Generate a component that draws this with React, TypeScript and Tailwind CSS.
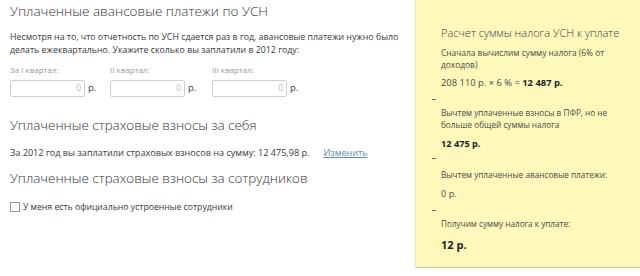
import React from "react";

const quarters = ["За I квартал:", "II квартал:", "III квартал:"];

const Dash = ({ mt }: { mt: string }) => <div className={`h-px w-[4px] bg-[#666] ml-[-9px] ${mt}`}></div>;

const App = () => {
  return (
    <div
      className="w-[640px] h-[276px] bg-white flex overflow-hidden text-[#3a3a3a]"
      style={{ fontFamily: '"Open Sans", "Noto Sans", sans-serif' }}
    >
      <div className="flex-1 pl-[10px] pt-[1px]">
        <h2 className="text-[13.5px] font-light leading-[20px] text-[#333]">Уплаченные авансовые платежи по УСН</h2>
        <p className="mt-[10px] text-[8.8px] leading-[13px] w-[395px]">
          Несмотря на то, что отчетность по УСН сдается раз в год, авансовые платежи нужно было делать ежеквартально. Укажите сколько вы заплатили в 2012 году:
        </p>
        <div className="flex mt-[7px]">
          {quarters.map((q, i) => (
            <div key={i} className={i === 0 ? "w-[100px]" : "w-[102px]"}>
              <div className="text-[8px] text-[#999] leading-[12px]">{q}</div>
              <div className="flex items-center mt-[4px]">
                <div className="w-[75px] h-[17px] border border-[#cfcfcf] rounded-[2px] flex items-center justify-end pr-[3px] text-[8.5px] text-[#bbb]">
                  0
                </div>
                <span className="ml-[3px] text-[9.5px]">р.</span>
              </div>
            </div>
          ))}
        </div>
        <h2 className="mt-[18px] text-[13.4px] font-light leading-[20px] text-[#333]">Уплаченные страховые взносы за себя</h2>
        <div className="mt-[11px] text-[9.1px] leading-[14px] flex">
          <span>За 2012 год вы заплатили страховых взносов на сумму: 12 475,98 р.</span>
          <span className="ml-[14px] text-[#5b8db5] underline">Изменить</span>
        </div>
        <h2 className="mt-[8px] text-[13.4px] font-light leading-[20px] text-[#333]">Уплаченные страховые взносы за сотрудников</h2>
        <label className="mt-[12px] flex items-center text-[8.7px] leading-[14px]">
          <span className="w-[10px] h-[10px] border border-[#999] bg-white mr-[3px]"></span>
          У меня есть официально устроенные сотрудники
        </label>
      </div>
      <div className="w-[225px] h-[268px] shrink-0 bg-[#fdf9ba] border-l border-[#efe9a8] border-b border-b-[#c4c4b4] pl-[25px] pr-[8px] pt-[25px] text-[#4a4a4a]">
        <h3 className="text-[11px] font-light leading-[16px] text-[#3a3a3a]">Расчет суммы налога УСН к уплате</h3>
        <p className="mt-[6px] text-[8.4px] leading-[12px] w-[170px]">Сначала вычислим сумму налога (6% от доходов)</p>
        <p className="mt-[5px] text-[9.4px] leading-[14px]">
          208 110 р. × 6 % = <b className="text-[#222]">12 487 р.</b>
        </p>
        <Dash mt="mt-[9px]" />
        <p className="mt-[7px] text-[8.2px] leading-[12px] w-[172px]">Вычтем уплаченные взносы в ПФР, но не больше общей суммы налога</p>
        <p className="mt-[6px] text-[9.2px] leading-[14px] font-bold text-[#222]">12 475 р.</p>
        <Dash mt="mt-[7px]" />
        <p className="mt-[10px] text-[8.2px] leading-[12px]">Вычтем уплаченные авансовые платежи:</p>
        <p className="mt-[6px] text-[9.2px] leading-[14px]">0 р.</p>
        <Dash mt="mt-[9px]" />
        <p className="mt-[7px] text-[8.2px] leading-[12px]">Получим сумму налога к уплате:</p>
        <p className="mt-[7px] text-[11px] leading-[16px] font-bold text-[#222]">12 р.</p>
      </div>
    </div>
  );
};

export default App;
